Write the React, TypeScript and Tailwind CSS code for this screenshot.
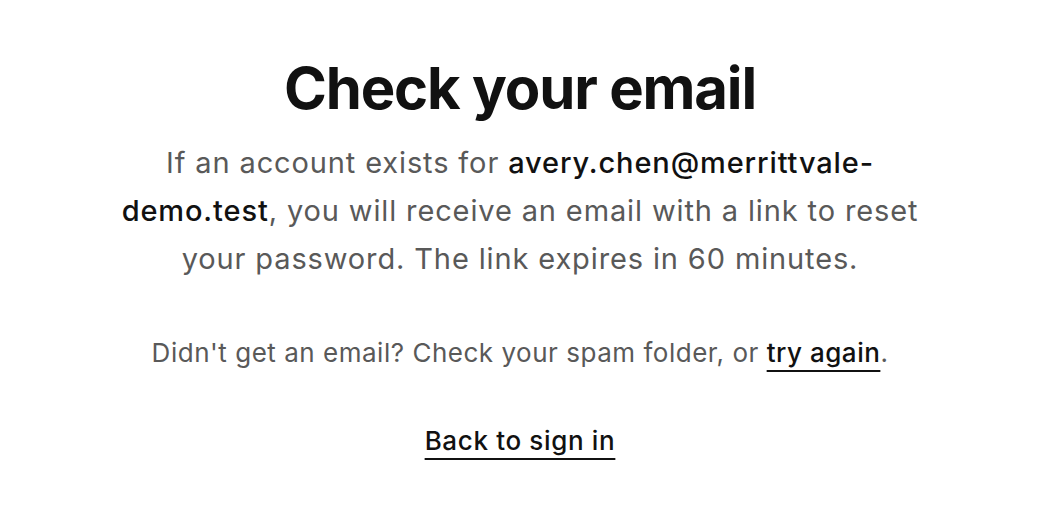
export default function App() {
  return (
    <div className="flex min-h-[512px] w-full justify-center bg-white font-['Inter',sans-serif]">
      <div className="flex w-[808px] flex-col items-center pt-[52px] text-center">
        <h1 className="text-[58px] font-bold leading-[72px] tracking-[-0.02em] text-[#111111]">
          Check your email
        </h1>
        <p className="mt-[15px] text-[29px] leading-[48px] tracking-[0.03em] text-[#595959]">
          If an account exists for{' '}
          <span className="font-medium text-[#111111]">avery.chen@merrittvale-demo.test</span>, you
          will receive an email with a link to reset your password. The link expires in 60 minutes.
        </p>
        <p className="mt-[50px] text-[26px] leading-[40px] tracking-[0.02em] text-[#595959]">
          Didn't get an email? Check your spam folder, or{' '}
          <a
            href="#"
            className="font-medium text-[#111111] underline decoration-2 underline-offset-[8px]"
          >
            try again
          </a>
          .
        </p>
        <a
          href="#"
          className="mt-[48px] text-[26px] font-medium leading-[40px] tracking-[0.025em] text-[#111111] underline decoration-2 underline-offset-[8px]"
        >
          Back to sign in
        </a>
      </div>
    </div>
  )
}
